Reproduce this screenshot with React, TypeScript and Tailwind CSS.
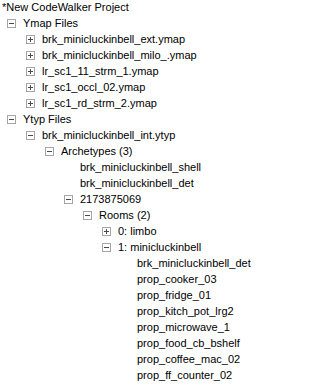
import React from "react";

type Row = { level: number; text: string; exp?: "+" | "-" };

const rows: Row[] = [
  { level: 0, text: "Ymap Files", exp: "-" },
  { level: 1, text: "brk_minicluckinbell_ext.ymap", exp: "+" },
  { level: 1, text: "brk_minicluckinbell_milo_.ymap", exp: "+" },
  { level: 1, text: "lr_sc1_11_strm_1.ymap", exp: "+" },
  { level: 1, text: "lr_sc1_occl_02.ymap", exp: "+" },
  { level: 1, text: "lr_sc1_rd_strm_2.ymap", exp: "+" },
  { level: 0, text: "Ytyp Files", exp: "-" },
  { level: 1, text: "brk_minicluckinbell_int.ytyp", exp: "-" },
  { level: 2, text: "Archetypes (3)", exp: "-" },
  { level: 3, text: "brk_minicluckinbell_shell" },
  { level: 3, text: "brk_minicluckinbell_det" },
  { level: 3, text: "2173875069", exp: "-" },
  { level: 4, text: "Rooms (2)", exp: "-" },
  { level: 5, text: "0: limbo", exp: "+" },
  { level: 5, text: "1: minicluckinbell", exp: "-" },
  { level: 6, text: "brk_minicluckinbell_det" },
  { level: 6, text: "prop_cooker_03" },
  { level: 6, text: "prop_fridge_01" },
  { level: 6, text: "prop_kitch_pot_lrg2" },
  { level: 6, text: "prop_microwave_1" },
  { level: 6, text: "prop_food_cb_bshelf" },
  { level: 6, text: "prop_coffee_mac_02" },
  { level: 6, text: "prop_ff_counter_02" },
  { level: 6, text: "prop_ff_counter_01" },
];

const indent = [
  "pl-[7px]",
  "pl-[26px]",
  "pl-[45px]",
  "pl-[64px]",
  "pl-[83px]",
  "pl-[102px]",
  "pl-[121px]",
];

function Box({ exp }: { exp: "+" | "-" }) {
  return (
    <svg width="9" height="9" viewBox="0 0 9 9" className="shrink-0 block">
      <rect x="0.5" y="0.5" width="8" height="8" fill="#fff" stroke="#a5a5a5" />
      <line x1="2" y1="4.5" x2="7" y2="4.5" stroke="#4a4a4a" />
      {exp === "+" && <line x1="4.5" y1="2" x2="4.5" y2="7" stroke="#4a4a4a" />}
    </svg>
  );
}

export default function App() {
  return (
    <div
      className="w-[329px] h-[387px] bg-white overflow-hidden text-black text-[11px]"
      style={{ fontFamily: '"Liberation Sans", Arial, sans-serif' }}
    >
      <div className="-mt-px">
        <div className="h-[16px] flex items-center pl-[2px] whitespace-nowrap leading-[16px]">
          *New CodeWalker Project
        </div>
        {rows.map((r, i) => (
          <div
            key={i}
            className={`h-[16px] flex items-center whitespace-nowrap leading-[16px] ${indent[r.level]}`}
          >
            {r.exp ? <Box exp={r.exp} /> : <span className="w-[9px] shrink-0" />}
            <span className="ml-[7px]">{r.text}</span>
          </div>
        ))}
      </div>
    </div>
  );
}
